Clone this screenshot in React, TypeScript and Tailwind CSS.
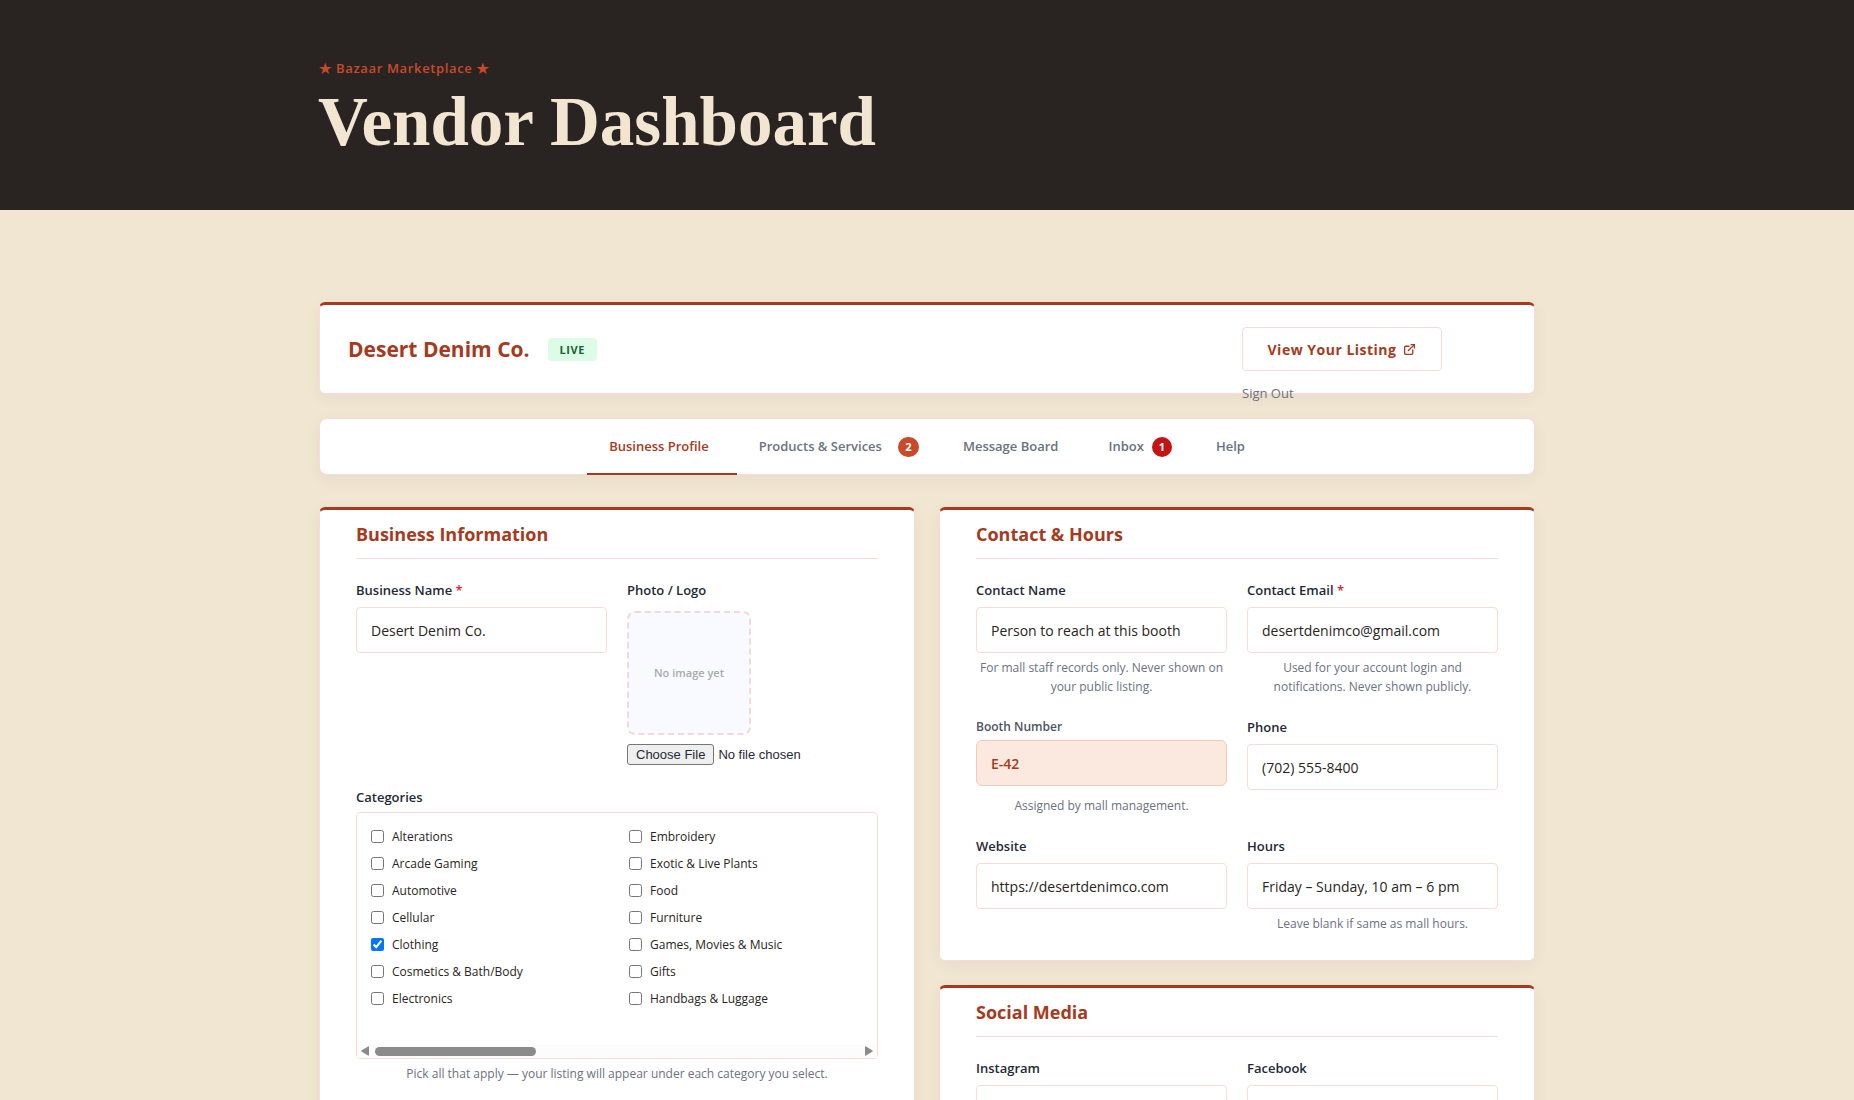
import type { ReactNode } from 'react'
import { ExternalLink } from 'lucide-react'

const leftCategories = ['Alterations', 'Arcade Gaming', 'Automotive', 'Cellular', 'Clothing', 'Cosmetics & Bath/Body', 'Electronics']
const rightCategories = ['Embroidery', 'Exotic & Live Plants', 'Food', 'Furniture', 'Games, Movies & Music', 'Gifts', 'Handbags & Luggage']

interface FieldProps {
  id: string
  label: string
  value?: string
  type?: string
  required?: boolean
  hint?: string
}

function Hint({ children }: { children: ReactNode }) {
  return <p className="mt-[5px] text-center text-[12px] leading-[19px] text-[#6b7280]">{children}</p>
}

function Label({ htmlFor, required, children }: { htmlFor: string; required?: boolean; children: ReactNode }) {
  return (
    <label htmlFor={htmlFor} className="block text-[13px] leading-5 font-semibold text-[#1f2937]">
      {children}
      {required && <span className="text-[#dc2626]"> *</span>}
    </label>
  )
}

function Field({ id, label, value = '', type = 'text', required, hint }: FieldProps) {
  return (
    <div>
      <Label htmlFor={id} required={required}>{label}</Label>
      <input
        id={id}
        type={type}
        defaultValue={value}
        className="mt-[7px] block h-[46px] w-full rounded border border-[#f8dcd7] bg-white px-3.5 text-[14px] text-[#292421]"
      />
      {hint && <Hint>{hint}</Hint>}
    </div>
  )
}

function Card({ title, children }: { title: string; children: ReactNode }) {
  return (
    <section className="rounded-md border border-t-[3px] border-[#f8dcd7] border-t-[#a63a20] bg-white px-9 pb-[27px] shadow-[0_4px_16px_rgba(41,36,33,0.05)]">
      <h2 className="mb-[21px] border-b border-[#f8dcd7] pt-3 pb-3 text-[18px] leading-6 font-bold text-[#a63a20]">{title}</h2>
      {children}
    </section>
  )
}

function CategoryList({ items }: { items: string[] }) {
  return (
    <ul>
      {items.map((name) => (
        <li key={name} className="h-[27px]">
          <label className="flex items-center gap-2 text-[12px] leading-[19px] text-[#292421]">
            <input type="checkbox" defaultChecked={name === 'Clothing'} className="h-[13px] w-[13px]" />
            {name}
          </label>
        </li>
      ))}
    </ul>
  )
}

function Tab({ active, badge, last, children }: { active?: boolean; badge?: ReactNode; last?: boolean; children: ReactNode }) {
  return (
    <button
      type="button"
      className={
        active
          ? '-mb-px flex h-14 items-center border-b-2 border-[#a63a20] pt-0.5 pr-7 pl-[22px] text-[13px] font-semibold text-[#a63a20]'
          : '-mb-px flex h-14 items-center border-b-2 border-transparent pt-0.5 pl-[22px] text-[13px] font-semibold text-[#6b7280]'
      }
    >
      {children}
      {!active && <span className={badge || last ? 'pr-[22px]' : 'pr-7'}>{badge}</span>}
    </button>
  )
}

export default function App() {
  return (
    <div className="min-h-screen bg-[#f1e6d2] pb-10 font-['Open_Sans','Noto_Sans','DejaVu_Sans',sans-serif] text-[#292421]">
      <header className="h-[210px] bg-[#292421] pt-[58px]">
        <div className="mx-auto max-w-[1218px]">
          <p className="flex items-center gap-[3px] text-[13px] leading-5 font-semibold tracking-wider text-[#c94a2b]">
            <span className="text-[16px]">★</span>
            Bazaar Marketplace
            <span className="text-[16px]">★</span>
          </p>
          <h1 className="mt-[5px] font-['Liberation_Serif',serif] text-[69px] leading-[78px] font-bold text-[#f2e6d2]">Vendor Dashboard</h1>
        </div>
      </header>

      <main className="mx-auto max-w-[1216px] pt-[92px]">
        <div className="flex h-[92px] justify-between rounded-md border border-t-[3px] border-[#f8dcd7] border-t-[#a63a20] bg-white pl-7 shadow-[0_4px_16px_rgba(41,36,33,0.05)]">
          <div className="flex items-center gap-[18px]">
            <p className="text-[21px] leading-8 font-bold text-[#a63a20]">Desert Denim Co.</p>
            <span className="rounded bg-[#dcfce7] px-3 text-[11px] leading-[23px] font-bold tracking-wider text-[#166534]">LIVE</span>
          </div>
          <div className="mr-[92px] flex flex-col items-start pt-[22px]">
            <a href="#listing" className="flex h-11 w-[200px] shrink-0 items-center justify-center gap-[7px] rounded border border-[#f8dcd7] text-[14px] font-bold tracking-[0.5px] text-[#a63a20]">
              View Your Listing
              <ExternalLink className="h-[13px] w-[13px]" strokeWidth={2.5} />
            </a>
            <button type="button" className="mt-3 text-[13px] leading-5 text-[#6b7280]">Sign Out</button>
          </div>
        </div>

        <nav className="mt-6 flex h-[57px] justify-center rounded-lg border border-[#f8dcd7] bg-white shadow-[0_4px_16px_rgba(41,36,33,0.05)]">
          <Tab active>Business Profile</Tab>
          <Tab badge={<span className="ml-4 flex h-5 w-[21px] items-center justify-center rounded-full bg-[#c94a2b] text-[11px] font-bold text-white">2</span>}>
            Products &amp; Services
          </Tab>
          <Tab>Message Board</Tab>
          <Tab badge={<span className="ml-2 flex h-5 w-5 items-center justify-center rounded-full bg-[#c41414] text-[11px] font-bold text-white">1</span>}>
            Inbox
          </Tab>
          <Tab last>Help</Tab>
        </nav>

        <div className="mt-8 grid grid-cols-2 gap-6">
          <Card title="Business Information">
            <div className="grid grid-cols-2 gap-5">
              <Field id="business-name" label="Business Name" value="Desert Denim Co." required />
              <div>
                <Label htmlFor="photo">Photo / Logo</Label>
                <div className="mt-[11px] flex h-[124px] w-[124px] items-center justify-center rounded-lg border-2 border-dashed border-[#f3d9d9] bg-[#f9faff] text-[11px] font-semibold text-[#aaaaaa]">
                  No image yet
                </div>
                <input
                  id="photo"
                  type="file"
                  className="mt-[9px] block w-full font-['Liberation_Sans',sans-serif] text-[13px] leading-[17px] text-[#1f2937] file:rounded-[3px] file:border file:border-solid file:border-[#767676] file:bg-[#efefef] file:px-2 file:py-px file:text-[#1f2937]"
                />
              </div>
            </div>
            <fieldset className="mt-[22px]">
              <legend className="text-[13px] leading-5 font-semibold text-[#1f2937]">Categories</legend>
              <div className="mt-[5px] rounded border border-[#f8dcd7]">
                <div className="grid h-[231px] grid-cols-2 gap-x-2.5 pt-3.5 pl-3.5">
                  <CategoryList items={leftCategories} />
                  <CategoryList items={rightCategories} />
                </div>
                <div className="flex h-[14px] items-center gap-1.5 bg-[#fcfcfc] px-1">
                  <svg viewBox="0 0 8 10" className="h-2.5 w-2 fill-[#8b8b8b]"><path d="M7 0.5Q8 0 8 1V9Q8 10 7 9.500L0.500 5.500Q0 5 0.500 4.500Z" /></svg>
                  <div className="grow">
                    <div className="h-[9px] w-1/3 rounded-full bg-[#8b8b8b]" />
                  </div>
                  <svg viewBox="0 0 8 10" className="h-2.5 w-2 fill-[#8b8b8b]"><path d="M1 0.5Q0 0 0 1V9Q0 10 1 9.500L7.500 5.500Q8 5 7.500 4.500Z" /></svg>
                </div>
              </div>
              <Hint>Pick all that apply — your listing will appear under each category you select.</Hint>
            </fieldset>
          </Card>

          <div className="flex flex-col gap-6">
            <Card title="Contact & Hours">
              <div className="grid grid-cols-2 gap-x-5 gap-y-[21px]">
                <Field id="contact-name" label="Contact Name" value="Person to reach at this booth" hint="For mall staff records only. Never shown on your public listing." />
                <Field id="contact-email" label="Contact Email" type="email" value="desertdenimco@gmail.com" required hint="Used for your account login and notifications. Never shown publicly." />
                <div>
                  <p className="text-[12px] leading-[19px] font-semibold text-[#4b5563]">Booth Number</p>
                  <div className="mt-1 mb-2.5 flex h-[46px] items-center rounded-md border border-[#f3c9bc] bg-[#fbe8df] px-3.5 text-[14px] font-semibold text-[#a63a20]">E-42</div>
                  <Hint>Assigned by mall management.</Hint>
                </div>
                <Field id="phone" label="Phone" type="tel" value="(702) 555-8400" />
                <Field id="website" label="Website" type="url" value="https://desertdenimco.com" />
                <Field id="hours" label="Hours" value="Friday – Sunday, 10 am – 6 pm" hint="Leave blank if same as mall hours." />
              </div>
            </Card>
            <Card title="Social Media">
              <div className="grid grid-cols-2 gap-5">
                <Field id="instagram" label="Instagram" />
                <Field id="facebook" label="Facebook" />
              </div>
            </Card>
          </div>
        </div>
      </main>
    </div>
  )
}
